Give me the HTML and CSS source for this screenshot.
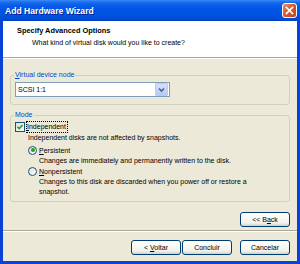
FILE: index.html
```html
<!DOCTYPE html>
<html lang="en">
<head>
  <meta charset="UTF-8">
  <title>Add Hardware Wizard</title>
  <link rel="stylesheet" href="styles.css">
</head>
<body>
  <div class="window">
    <div class="titlebar">
      <span class="title">Add Hardware Wizard</span>
      <span class="close">
        <svg width="13" height="13" viewBox="0 0 13 13"><path d="M3.5 3.5 L9.5 9.5 M9.5 3.5 L3.5 9.5" stroke="#fff" stroke-width="1.7" stroke-linecap="square"/></svg>
      </span>
    </div>
    <div class="frame">
      <div class="header">
        <div class="h-title">Specify Advanced Options</div>
        <div class="h-sub">What kind of virtual disk would you like to create?</div>
      </div>
      <div class="content">
        <fieldset class="group node">
          <legend><u>V</u>irtual device node</legend>
          <div class="combo">
            <span class="combo-text">SCSI 1:1</span>
            <span class="combo-btn">
              <svg width="11" height="11" viewBox="0 0 11 11"><path d="M3 4.5 L5.5 7 L8 4.5" fill="none" stroke="#4D6185" stroke-width="1.6"/></svg>
            </span>
          </div>
        </fieldset>
        <fieldset class="group mode">
          <legend>Mode</legend>
          <div class="check-row">
            <span class="checkbox">
              <svg width="8" height="8" viewBox="0 0 8 8"><path d="M1.5 3.8 L3.2 5.6 L6.6 2" fill="none" stroke="#21A121" stroke-width="1.5"/></svg>
            </span>
            <span class="focus"><u>I</u>ndependent</span>
          </div>
          <div class="desc desc-check">Independent disks are not affected by snapshots.</div>
          <div class="radio-row first">
            <span class="radio on"></span>
            <span><u>P</u>ersistent</span>
          </div>
          <div class="desc desc-radio">Changes are immediately and permanently written to the disk.</div>
          <div class="radio-row">
            <span class="radio"></span>
            <span><u>N</u>onpersistent</span>
          </div>
          <div class="desc desc-radio last">Changes to this disk are discarded when you power off or restore a snapshot.</div>
        </fieldset>
        <div class="back-row">
          <button class="btn">&lt;&lt; B<u>a</u>ck</button>
        </div>
      </div>
      <div class="separator"></div>
      <div class="footer">
        <button class="btn">&lt; <u>V</u>oltar</button>
        <button class="btn">Concluir</button>
        <button class="btn cancel">Cancelar</button>
      </div>
    </div>
  </div>
</body>
</html>
```

FILE: styles.css
```css
* {
  box-sizing: border-box;
}

body {
  margin: 0;
  font-family: "Liberation Sans", Arial, sans-serif;
  font-size: 7px;
  color: #000;
  background: #fff;
}

.window {
  width: 300px;
  height: 264px;
  display: flex;
  flex-direction: column;
}

.titlebar {
  height: 21px;
  flex: none;
  display: flex;
  align-items: center;
  justify-content: space-between;
  padding: 0 3px 0 5px;
  background: linear-gradient(#3D8DF5 0, #1C6EEF 2px, #0A5DE8 5px, #0055E5 10px, #0053E1 15px, #004BD6 19px, #003FC0 21px);
}

.title {
  color: #fff;
  font-weight: bold;
  font-size: 8.6px;
  text-shadow: 1px 1px 0 #0A1E8C;
}

.close {
  width: 15px;
  height: 15px;
  border: 1px solid #fff;
  border-radius: 3px;
  background: linear-gradient(135deg, #E8916E 0%, #D85A32 45%, #C5431B 100%);
  display: flex;
  align-items: center;
  justify-content: center;
}

.frame {
  flex: 1;
  display: flex;
  flex-direction: column;
  border: 3px solid #0842D6;
  border-top: 0;
  background: #ECE9D8;
}

.header {
  height: 37px;
  flex: none;
  background: #fff;
  padding: 5px 0 0 14px;
  border-bottom: 1px solid #ACA899;
}

.h-title {
  font-weight: bold;
  font-size: 7.4px;
  line-height: 10px;
}

.h-sub {
  padding-left: 15px;
  line-height: 11px;
  margin-top: 1px;
}

.content {
  flex: none;
  border-top: 1px solid #fff;
  padding: 11px 7px 0;
}

.group {
  margin: 0;
  padding: 0 4px;
  min-inline-size: 0;
  border: 1px solid #D0D0BF;
  border-radius: 3px;
}

.group legend {
  padding: 0 1px;
  margin-left: -1px;
  line-height: 10px;
  color: #0046D5;
}

.node {
  padding-top: 2px;
  padding-bottom: 7px;
}

.combo {
  width: 155px;
  height: 15px;
  border: 1px solid #7F9DB9;
  background: #fff;
  display: flex;
  align-items: center;
  justify-content: space-between;
  padding: 0 1px 0 2px;
}

.combo-btn {
  width: 13px;
  height: 13px;
  border: 1px solid #B9CBF3;
  border-radius: 1px;
  background: linear-gradient(#D5E1FD, #B6CAF9);
  display: flex;
  align-items: center;
  justify-content: center;
}

.mode {
  margin-top: 5px;
  padding-top: 1px;
  padding-bottom: 5px;
}

.check-row {
  display: flex;
  align-items: center;
  height: 12px;
}

.checkbox {
  width: 10px;
  height: 10px;
  border: 1px solid #1C5180;
  background: linear-gradient(135deg, #DCDCD7, #FFFFFF);
  display: flex;
  align-items: center;
  justify-content: center;
  margin-right: 1px;
}

.focus {
  border: 1px dotted #000;
  line-height: 10px;
  padding: 0 1px 0 0;
}

.desc {
  line-height: 9px;
}

.desc-check {
  padding-left: 13px;
}

.radio-row {
  display: flex;
  align-items: center;
  height: 10px;
  padding-left: 13px;
  gap: 2px;
}

.radio-row.first {
  margin-top: 3px;
}

.radio {
  width: 9px;
  height: 9px;
  border: 1px solid #1C5180;
  border-radius: 50%;
  background: linear-gradient(135deg, #DCDCD7, #FFFFFF);
  display: flex;
  align-items: center;
  justify-content: center;
}

.radio.on::after {
  content: "";
  width: 4px;
  height: 4px;
  border-radius: 50%;
  background: #21A121;
}

.desc-radio {
  padding-left: 24px;
  line-height: 11px;
}

.desc-radio.last {
  line-height: 9.5px;
  margin-top: 1px;
  padding-right: 30px;
}

.back-row {
  display: flex;
  justify-content: flex-end;
  margin-top: 10px;
}

.btn {
  width: 50px;
  height: 15px;
  padding: 0;
  border: 1px solid #003C74;
  border-radius: 3px;
  background: linear-gradient(#FFFFFF, #F3F3EE 75%, #D6D0C5);
  font-family: "Liberation Sans", Arial, sans-serif;
  font-size: 7px;
  color: #000;
}

.separator {
  margin-top: 3px;
  height: 2px;
  border-top: 1px solid #ACA899;
  border-bottom: 1px solid #fff;
}

.footer {
  display: flex;
  justify-content: flex-end;
  gap: 1px;
  padding: 8px 7px 0;
}

.cancel {
  margin-left: 7px;
}
```
